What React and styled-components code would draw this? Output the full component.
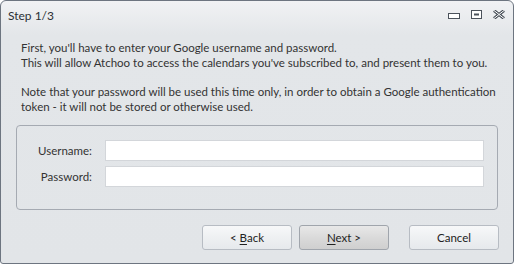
import React from 'react';
import styled, { createGlobalStyle } from 'styled-components';

const GlobalStyle = createGlobalStyle`
  html, body {
    margin: 0;
    padding: 0;
    background: #ffffff;
  }
  body {
    font-family: 'Lato', 'Liberation Sans', sans-serif;
    font-size: 11.5px;
    color: #333;
  }
`;

const MinimizeIcon = () => (
  <svg width="12" height="6" viewBox="0 0 12 6">
    <rect x="0.5" y="0.5" width="11" height="5" fill="#fff" stroke="#4b525b" />
  </svg>
);

const RestoreIcon = () => (
  <svg width="11" height="9" viewBox="0 0 11 9">
    <rect x="0.5" y="0.5" width="10" height="8" fill="#fff" stroke="#4b525b" />
    <rect x="3" y="3.5" width="5" height="2" fill="#4b525b" />
  </svg>
);

const CloseIcon = () => (
  <svg width="12" height="9" viewBox="0 0 12 9">
    <path d="M1 0.5 L11 8.5 M11 0.5 L1 8.5" stroke="#4b525b" strokeWidth="3" />
    <path d="M1 0.5 L11 8.5 M11 0.5 L1 8.5" stroke="#ffffff" strokeWidth="1" />
  </svg>
);

const Wizard = () => {
  return (
    <Window>
      <TitleBar>
        <Title>Step 1/3</Title>
        <Controls>
          <ControlSlot>
            <MinimizeIcon />
          </ControlSlot>
          <ControlSlot>
            <RestoreIcon />
          </ControlSlot>
          <ControlSlot>
            <CloseIcon />
          </ControlSlot>
        </Controls>
      </TitleBar>
      <Intro>
        <p>
          First, you'll have to enter your Google username and password.
          <br />
          This will allow Atchoo to access the calendars you've subscribed to, and present them to you.
        </p>
        <p>
          Note that your password will be used this time only, in order to obtain a Google authentication
          <br />
          token - it will not be stored or otherwise used.
        </p>
      </Intro>
      <GroupBox>
        <Label>Username:</Label>
        <Field type="text" />
        <Label>Password:</Label>
        <Field type="password" />
      </GroupBox>
      <ButtonRow>
        <Button>
          &lt; <u>B</u>ack
        </Button>
        <Button $primary>
          <u>N</u>ext &gt;
        </Button>
        <Button $spaced>Cancel</Button>
      </ButtonRow>
    </Window>
  );
};

export default function App() {
  return (
    <>
      <GlobalStyle />
      <Wizard />
    </>
  );
}

const Window = styled.div`
  width: 514px;
  height: 264px;
  box-sizing: border-box;
  border: 1px solid #6d7580;
  border-radius: 6px 6px 3px 3px;
  background: linear-gradient(to bottom, #f1f2f4 0px, #e3e6e9 34px, #e2e5e8 100%);
  display: flex;
  flex-direction: column;
  overflow: hidden;
`;

const TitleBar = styled.div`
  height: 27px;
  display: flex;
  align-items: center;
  justify-content: space-between;
  padding: 0 8px 0 7px;
`;

const Title = styled.div`
  font-size: 12px;
  color: #2b2f35;
  margin-top: 1px;
`;

const Controls = styled.div`
  display: flex;
  align-items: flex-end;
  gap: 11px;
  margin-top: -2px;
`;

const ControlSlot = styled.span`
  display: flex;
  align-items: flex-end;
  height: 10px;
`;

const Intro = styled.div`
  padding: 12px 18px 0 20px;
  display: flex;
  flex-direction: column;
  gap: 14px;
  p {
    margin: 0;
    line-height: 15px;
    font-size: 11.5px;
    color: #333;
    white-space: nowrap;
  }
`;

const GroupBox = styled.div`
  margin: 11px 15px 0 15px;
  height: 85px;
  box-sizing: border-box;
  border: 1px solid #a5aab2;
  border-radius: 4px;
  padding: 14px 13px 0 0;
  display: grid;
  grid-template-columns: 75px 1fr;
  grid-auto-rows: 21px;
  column-gap: 13px;
  row-gap: 5px;
  align-items: center;
`;

const Label = styled.label`
  text-align: right;
  font-size: 11.5px;
  color: #333;
`;

const Field = styled.input`
  height: 21px;
  box-sizing: border-box;
  border: 1px solid #d3d6da;
  background: #ffffff;
  margin: 0;
  padding: 0 3px;
  outline: none;
  font: inherit;
`;

const ButtonRow = styled.div`
  display: flex;
  justify-content: flex-end;
  gap: 7px;
  padding: 15px 14px 0 0;
`;

const Button = styled.button`
  width: 90px;
  height: 25px;
  box-sizing: border-box;
  margin-left: ${(p) => (p.$spaced ? '13px' : '0')};
  border: 1px solid ${(p) => (p.$primary ? '#a0a5ac' : '#b7bcc3')};
  border-radius: 3px;
  background: ${(p) =>
    p.$primary
      ? 'linear-gradient(to bottom, #e8e8e8 0%, #dadada 50%, #cfcfcf 100%)'
      : 'linear-gradient(to bottom, #f7f8f9 0%, #eef0f2 50%, #e6e9ec 100%)'};
  font-family: inherit;
  font-size: 11.5px;
  color: #222;
  padding: 0;
  u {
    text-underline-offset: 2px;
  }
`;
